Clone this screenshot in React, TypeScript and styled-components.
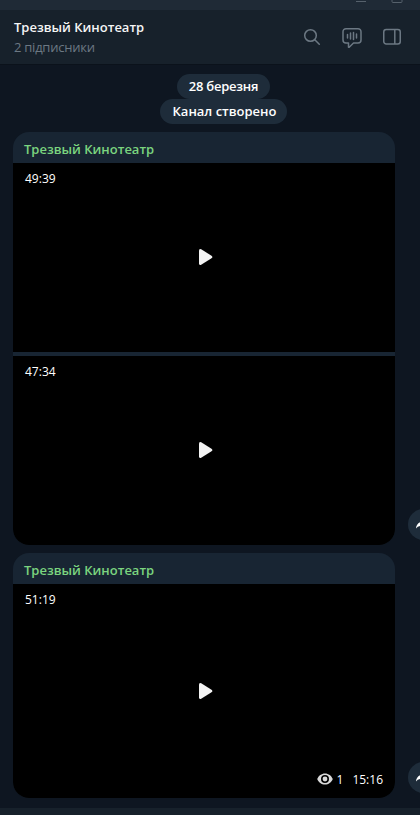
import React from 'react';
import styled, { createGlobalStyle } from 'styled-components';

const GlobalStyle = createGlobalStyle`
  * { box-sizing: border-box; }
  html, body { margin: 0; overflow: hidden; background: #0e1621; }
  body { font-family: 'Open Sans', 'Noto Sans', sans-serif; font-size: 13px; color: #fff; }
`;

const Window = styled.div`
  width: 100%;
  height: 815px;
  display: flex;
  flex-direction: column;
  overflow: hidden;
  background: #0e1621;
`;

const TitleBar = styled.div`
  height: 10px;
  flex: none;
  display: flex;
  justify-content: flex-end;
  background: #1f2a36;
`;

const Header = styled.header`
  height: 54px;
  flex: none;
  display: flex;
  justify-content: space-between;
  padding: 7px 18px 0 14px;
  background: #17212b;
`;

const Name = styled.div`
  font-weight: 600;
  line-height: 20px;
  white-space: nowrap;
  color: #f5f5f5;
`;

const Subscribers = styled.div`
  line-height: 20px;
  letter-spacing: -0.25px;
  color: #6c7883;
`;

const Actions = styled.div`
  display: flex;
  gap: 20px;
  padding-top: 10px;
`;

const Feed = styled.main`
  flex: 1;
  display: flex;
  flex-direction: column;
  padding: 9px 25px 0 13px;
  border-top: 1px solid #0b121b;
`;

const ServiceMessages = styled.div`
  display: flex;
  flex-direction: column;
  align-items: center;
  width: 421px;
  height: 58px;
  flex: none;
`;

const Pill = styled.div<{ $width: number; $inset?: number; $tracking?: number }>`
  width: ${(p) => p.$width}px;
  height: 25px;
  flex: none;
  padding-left: ${(p) => p.$inset ?? 0}px;
  border-radius: 13px;
  background: #1e2c3a;
  font-weight: 600;
  letter-spacing: ${(p) => p.$tracking ?? 0}px;
  line-height: 24px;
  text-align: center;
  white-space: nowrap;
`;

const Message = styled.article`
  position: relative;
  width: 382px;
  flex: none;
  margin-bottom: 8px;
`;

const Bubble = styled.div`
  display: flex;
  flex-direction: column;
  overflow: hidden;
  border-radius: 16px;
  background: #182533;
`;

const Author = styled.div`
  height: 31px;
  padding: 2px 11px 0;
  font-weight: 600;
  line-height: 30px;
  color: #7bd47f;
`;

const Videos = styled.div`
  display: flex;
  flex-direction: column;
  gap: 4px;
`;

const Video = styled.div<{ $height: number }>`
  position: relative;
  height: ${(p) => p.$height}px;
  display: flex;
  align-items: center;
  justify-content: center;
  padding: 0 0 1px 2px;
  background: #000;
`;

const Duration = styled.span`
  position: absolute;
  left: 12px;
  top: 7px;
  line-height: 18px;
  font-size: 12px;
`;

const Meta = styled.div`
  position: absolute;
  right: 12px;
  bottom: 9px;
  display: flex;
  align-items: center;
  font-size: 12px;
  line-height: 18px;

  svg { margin-bottom: 2px; }
`;

const Views = styled.span`
  margin: 0 9px 0 4px;
`;

const ShareButton = styled.button`
  position: absolute;
  left: 395px;
  bottom: 5px;
  width: 31px;
  height: 31px;
  padding: 0;
  border: 0;
  border-radius: 50%;
  background: #1e2c3a;
`;

const Composer = styled.footer`
  height: 7px;
  flex: none;
  background: #17212b;
`;

const WindowControls = () => (
  <svg width="70" height="10" fill="none" stroke="#56616c" strokeWidth="1">
    <path d="M6 1.5h10M42 0v1.5q0 1 1 1h8q1 0 1-1V0" />
  </svg>
);

const SearchIcon = () => (
  <svg width="20" height="22" fill="none" stroke="#6c7883" strokeWidth="1.5" strokeLinecap="round">
    <circle cx="8.5" cy="8.5" r="5.8" />
    <path d="m12.800 12.800 4.500 4.500" />
  </svg>
);

const VoiceChatIcon = () => (
  <svg width="20" height="22" fill="none" stroke="#6c7883" strokeWidth="1.5" strokeLinecap="round" strokeLinejoin="round">
    <path d="M4 1.7h12a3 3 0 0 1 3 3v8.300a3 3 0 0 1-3 3h-4.500L7.200 20.200h-.7V16H4a3 3 0 0 1-3-3V4.700a3 3 0 0 1 3-3Z" />
    <path d="M5.500 7.500v3.500M8.500 6v6M11.500 5.500v7M14.500 7v4" />
  </svg>
);

const PanelIcon = () => (
  <svg width="20" height="22" fill="none" stroke="#6c7883" strokeWidth="1.5">
    <rect x="1.750" y="2.500" width="16.500" height="14.500" rx="2.500" />
    <path d="M12.800 2.500V17" />
  </svg>
);

const PlayIcon = () => (
  <svg width="16" height="20" viewBox="0 0 16 20" fill="#f3f3f3">
    <path d="M2 3.700Q2 1.200 4.200 2.300L14.500 8.700Q16.300 10 14.500 11.300L4.200 17.700Q2 18.800 2 16.300Z" />
  </svg>
);

const EyeIcon = () => (
  <svg width="16" height="12" viewBox="0 0 16 12">
    <path fill="#d9d9d9" fillRule="evenodd" d="M8 .4C4.500.4 1.500 2.600.2 6 1.500 9.400 4.500 11.600 8 11.600S14.500 9.400 15.800 6C14.500 2.600 11.500.4 8 .4ZM8 2a4 4 0 1 1 0 8 4 4 0 0 1 0-8Z" />
    <circle cx="8" cy="6" r="2.400" fill="#d9d9d9" />
  </svg>
);

const Share = () => (
  <ShareButton aria-label="Поділитися">
    <svg width="31" height="31" viewBox="0 0 31 31" fill="#fff">
      <path d="M15 9.500 22 15l-7 5.500V17q-4.500-.5-7 2.500Q8.500 13.500 15 12.500Z" />
    </svg>
  </ShareButton>
);

type Clip = { time: string; height: number };
type MessageProps = { clips: Clip[]; views?: number; sentAt?: string };

const VideoMessage = ({ clips, views, sentAt }: MessageProps) => (
  <Message>
    <Bubble>
      <Author>Трезвый Кинотеатр</Author>
      <Videos>
        {clips.map((clip) => (
          <Video key={clip.time} $height={clip.height}>
            <Duration>{clip.time}</Duration>
            <PlayIcon />
            {sentAt && (
              <Meta>
                <EyeIcon />
                <Views>{views}</Views>
                {sentAt}
              </Meta>
            )}
          </Video>
        ))}
      </Videos>
    </Bubble>
    <Share />
  </Message>
);

export default function App() {
  return (
    <>
      <GlobalStyle />
      <Window>
        <TitleBar><WindowControls /></TitleBar>
        <Header>
          <div>
            <Name>Трезвый Кинотеатр</Name>
            <Subscribers>2 підписники</Subscribers>
          </div>
          <Actions>
            <SearchIcon />
            <VoiceChatIcon />
            <PanelIcon />
          </Actions>
        </Header>
        <Feed>
          <ServiceMessages>
            <Pill $width={93} $tracking={-0.25}>28 березня</Pill>
            <Pill $width={127} $inset={2}>Канал створено</Pill>
          </ServiceMessages>
          <VideoMessage clips={[{ time: '49:39', height: 189 }, { time: '47:34', height: 189 }]} />
          <VideoMessage clips={[{ time: '51:19', height: 214 }]} views={1} sentAt="15:16" />
        </Feed>
        <Composer />
      </Window>
    </>
  );
}
